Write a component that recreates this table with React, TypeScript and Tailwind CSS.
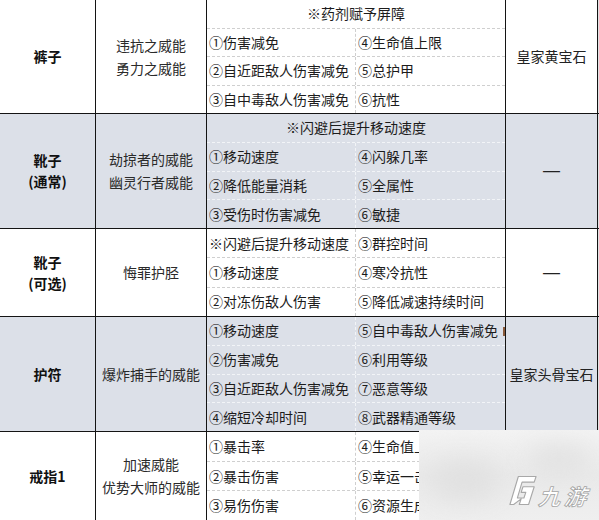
import React from "react";

type Sub = { span?: string; l?: string; r?: string; mark?: boolean };
type Sec = {
  h: string;
  gray?: boolean;
  name: string[];
  skills: string[];
  subs: Sub[];
  gem: string;
};

const sections: Sec[] = [
  {
    h: "h-[114px]",
    name: ["裤子"],
    skills: ["违抗之威能", "勇力之威能"],
    subs: [
      { span: "※药剂赋予屏障" },
      { l: "①伤害减免", r: "④生命值上限" },
      { l: "②自近距敌人伤害减免", r: "⑤总护甲" },
      { l: "③自中毒敌人伤害减免", r: "⑥抗性" },
    ],
    gem: "皇家黄宝石",
  },
  {
    h: "h-[115px]",
    gray: true,
    name: ["靴子", "(通常)"],
    skills: ["劫掠者的威能", "幽灵行者威能"],
    subs: [
      { span: "※闪避后提升移动速度" },
      { l: "①移动速度", r: "④闪躲几率" },
      { l: "②降低能量消耗", r: "⑤全属性" },
      { l: "③受伤时伤害减免", r: "⑥敏捷" },
    ],
    gem: "—",
  },
  {
    h: "h-[88px]",
    name: ["靴子", "(可选)"],
    skills: ["悔罪护胫"],
    subs: [
      { l: "※闪避后提升移动速度", r: "③群控时间" },
      { l: "①移动速度", r: "④寒冷抗性" },
      { l: "②对冻伤敌人伤害", r: "⑤降低减速持续时间" },
    ],
    gem: "—",
  },
  {
    h: "h-[115px]",
    gray: true,
    name: ["护符"],
    skills: ["爆炸捕手的威能"],
    subs: [
      { l: "①移动速度", r: "⑤自中毒敌人伤害减免", mark: true },
      { l: "②伤害减免", r: "⑥利用等级" },
      { l: "③自近距敌人伤害减免", r: "⑦恶意等级" },
      { l: "④缩短冷却时间", r: "⑧武器精通等级" },
    ],
    gem: "皇家头骨宝石",
  },
  {
    h: "h-[89px]",
    name: ["戒指1"],
    skills: ["加速威能", "优势大师的威能"],
    subs: [
      { l: "①暴击率", r: "④生命值上限" },
      { l: "②暴击伤害", r: "⑤幸运一击几率" },
      { l: "③易伤伤害", r: "⑥资源生成" },
    ],
    gem: "",
  },
];

function Section({ s }: { s: Sec }) {
  const dash = s.gray ? "border-[#f2f4f7]" : "border-[#cfcfcf]";
  return (
    <div
      className={`flex ${s.h} shrink-0 border-b border-[#141414] ${
        s.gray ? "bg-[#dce0e8]" : "bg-white"
      }`}
    >
      <div className="w-[96px] shrink-0 border-r border-[#141414] flex flex-col items-center justify-center font-bold text-[14px] leading-[21px] text-[#111]">
        {s.name.map((n) => (
          <div key={n}>{n}</div>
        ))}
      </div>
      <div className="w-[111px] shrink-0 border-r border-[#141414] flex flex-col items-center justify-center text-[14px] leading-[23px] text-[#2a2a2a]">
        {s.skills.map((n) => (
          <div key={n}>{n}</div>
        ))}
      </div>
      <div className="w-[299px] shrink-0 border-r border-[#141414] flex flex-col">
        {s.subs.map((sub, i) => (
          <div
            key={i}
            className={`flex flex-1 min-h-0 ${
              i < s.subs.length - 1 ? `border-b border-dashed ${dash}` : ""
            }`}
          >
            {sub.span ? (
              <div className="flex-1 flex items-center justify-center">{sub.span}</div>
            ) : (
              <>
                <div className={`w-[149px] shrink-0 border-r border-dashed ${dash} flex items-center pl-[2px] whitespace-nowrap`}>
                  {sub.l}
                </div>
                <div className="relative flex-1 flex items-center pl-[2px] whitespace-nowrap">
                  {sub.r}
                  {sub.mark && (
                    <span className="absolute right-0 top-[10px] w-[2px] h-[9px] bg-[#8a5a3a]" />
                  )}
                </div>
              </>
            )}
          </div>
        ))}
      </div>
      <div className="w-[92px] shrink-0 border-r border-[#141414] flex items-center justify-center text-[#222]">
        {s.gem === "—" ? (
          <span className="font-['Liberation_Sans',sans-serif] text-[17px]">—</span>
        ) : (
          s.gem
        )}
      </div>
      <div className="flex-1 bg-[#e2e2e2]" />
    </div>
  );
}

function Watermark() {
  return (
    <div className="absolute left-[419px] top-[430px] w-[180px] h-[90px] bg-gradient-to-b from-[#f3f3f3] via-[#eaeaea] to-[#efefef] overflow-hidden">
      <div className="absolute left-[10px] top-[30px] w-[70px] h-[40px] rounded-full bg-[#e0e0e0] blur-[14px]" />
      <div className="absolute left-[110px] top-[15px] w-[60px] h-[30px] rounded-full bg-[#e2e2e2] blur-[12px]" />
      <div className="absolute left-[90px] top-[45px] flex items-end">
        <svg width="28" height="31" viewBox="0 0 30 32" className="shrink-0">
          <path
            d="M10 1 L29 1 L27 7 L14 7 L9 24 L16 24 L18 18 L13 18 L15 12 L27 12 L21 31 L11 31 L13 25 L5 31 L1 31 Z"
            fill="#ffffff"
            stroke="#a8a8a8"
            strokeWidth="1.2"
            strokeLinejoin="round"
          />
        </svg>
        <span className="ml-[4px] mb-[-2px] -skew-x-[18deg] font-bold text-[22px] leading-[26px] text-white tracking-[4px] [-webkit-text-stroke:0.8px_#a5a5a5] font-['Noto_Sans_CJK_SC',sans-serif]">
          九游
        </span>
      </div>
    </div>
  );
}

export default function App() {
  return (
    <div className="relative w-[599px] h-[520px] overflow-hidden bg-white text-[14px] text-[#1c1c1c] font-['Noto_Sans_CJK_SC','Noto_Sans',sans-serif]">
      <div className="flex flex-col">
        {sections.map((s, i) => (
          <Section key={i} s={s} />
        ))}
      </div>
      <Watermark />
    </div>
  );
}
